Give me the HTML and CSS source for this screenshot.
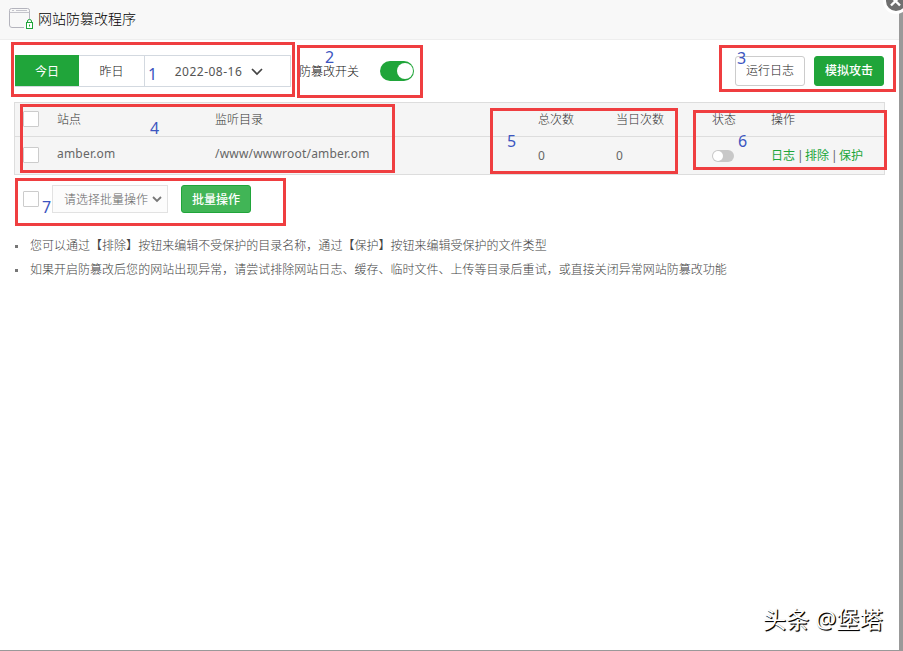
FILE: index.html
```html
<!DOCTYPE html>
<html lang="zh-CN">
<head>
  <meta charset="UTF-8">
  <title>网站防篡改程序</title>
  <link rel="stylesheet" href="styles.css">
</head>
<body>
<div class="dialog">
  <div class="dialog-title">
    <svg class="title-icon" width="26" height="22" viewBox="0 0 26 22" fill="none">
      <path d="M15 19.500H3Q.5 19.500 .5 17V2.500Q.5 .5 2.500 .5H18.500Q20.500 .5 20.500 2.500V11" stroke="#b4b4bd"/>
      <path d="M.5 4.500H20.500M3 2.500H5M7 2.500H18" stroke="#c4c4cb"/>
      <rect x="17.500" y="14.500" width="6" height="6" fill="#fff" stroke="#20a53a"/>
      <path d="M18.500 14V13Q18.500 11.500 20.500 11.500Q22.500 11.500 22.500 13V14M20.500 16.500V18.500" stroke="#20a53a"/>
    </svg>
    <span>网站防篡改程序</span>
  </div>

  <div class="toolbar">
    <div class="date-tabs">
      <span class="tab active">今日</span>
      <span class="tab">昨日</span>
      <span class="tab date">2022-08-16
        <svg width="12" height="8" viewBox="0 0 12 8" fill="none"><path d="M1 1L6 6L11 1" stroke="#444" stroke-width="1.700"/></svg>
      </span>
    </div>
    <span class="switch-label">防篡改开关</span>
    <span class="switch on"></span>
    <div class="toolbar-right">
      <button class="btn btn-default">运行日志</button>
      <button class="btn btn-success">模拟攻击</button>
    </div>
  </div>

  <div class="table">
    <div class="row head">
      <span class="check"></span>
      <span>站点</span>
      <span>监听目录</span>
      <span>总次数</span>
      <span>当日次数</span>
      <span>状态</span>
      <span>操作</span>
    </div>
    <div class="row">
      <span class="check"></span>
      <span class="latin">amber.om</span>
      <span class="latin">/www/wwwroot/amber.om</span>
      <span class="num">0</span>
      <span class="num">0</span>
      <span class="switch small"></span>
      <span class="links"><a>日志</a><i>|</i><a>排除</a><i>|</i><a>保护</a></span>
    </div>
  </div>

  <div class="batch">
    <span class="check"></span>
    <div class="select">
      <span>请选择批量操作</span>
      <svg width="10" height="7" viewBox="0 0 10 7" fill="none"><path d="M1 1L5 5L9 1" stroke="#777" stroke-width="1.800"/></svg>
    </div>
    <button class="btn btn-batch">批量操作</button>
  </div>

  <ul class="tips">
    <li>您可以通过【排除】按钮来编辑不受保护的目录名称，通过【保护】按钮来编辑受保护的文件类型</li>
    <li>如果开启防篡改后您的网站出现异常，请尝试排除网站日志、缓存、临时文件、上传等目录后重试，或直接关闭异常网站防篡改功能</li>
  </ul>
</div>

<svg class="close" width="26" height="26" viewBox="0 0 26 26" fill="none">
  <circle cx="13" cy="13" r="11.500" fill="#6f6f6f" stroke="#fff" stroke-width="3"/>
  <path d="M8 17.500L17 8.500M8 8.500L17 17.500" stroke="#fff" stroke-width="2.400"/>
</svg>

<!-- 标注 -->
<div class="mark m1"></div>
<div class="mark m2"></div>
<div class="mark m3"></div>
<div class="mark m4"></div>
<div class="mark m5"></div>
<div class="mark m6"></div>
<div class="mark m7"></div>
<span class="no n1">1</span>
<span class="no n2">2</span>
<span class="no n3">3</span>
<span class="no n4">4</span>
<span class="no n5">5</span>
<span class="no n6">6</span>
<span class="no n7">7</span>
<div class="watermark">头条 @堡塔</div>
</body>
</html>
```

FILE: styles.css
```css
* {
  box-sizing: border-box;
}

body {
  margin: 0;
  height: 651px;
  position: relative;
  overflow: hidden;
  background: #999;
  font: 300 12px/18px "Noto Sans", "Noto Sans CJK SC", sans-serif;
  color: #333;
}

.dialog {
  width: 899px;
  height: 650px;
  background: #fff;
}

.dialog-title {
  height: 40px;
  padding: 0 0 2px 9px;
  display: flex;
  align-items: center;
  gap: 3px;
  background: #f8f8f8;
  border-bottom: 1px solid #eee;
  font-size: 14px;
  color: #000;
}

.toolbar {
  display: flex;
  align-items: center;
  padding: 15px 15px 0;
  height: 47px;
}

.date-tabs {
  display: flex;
  width: 276px;
  height: 32px;
  border: 1px solid #d3d9e0;
  border-left: 0;
  color: #111;
}

.tab {
  width: 66px;
  padding-top: 1px;
  display: flex;
  align-items: center;
  justify-content: center;
  border-right: 1px solid #d3d9e0;
}

.tab.active {
  width: 64px;
  height: 31px;
  margin-top: -1px;
  padding-top: 2px;
  background: #20a53a;
  border: 0;
  color: #fff;
  font-weight: 400;
}

.tab.date {
  flex: 1;
  gap: 9px;
  padding-left: 3px;
  border: 0;
  letter-spacing: 0.5px;
  font-weight: 400;
  color: #555;
}

.switch-label {
  margin-left: 8px;
  margin-right: 21px;
  padding-top: 2px;
  line-height: 14px;
  color: #111;
}

.switch {
  width: 34px;
  height: 20px;
  padding: 1px;
  border-radius: 10px;
  display: flex;
}

.switch::after {
  content: "";
  width: 16px;
  height: 16px;
  border-radius: 50%;
  background: #fff;
}

.switch.on {
  padding: 2px 1px;
  justify-content: flex-end;
  background: #20a53a;
}

.switch.small {
  width: 22px;
  height: 12px;
  background: #c8c8c8;
}

.switch.small::after {
  width: 10px;
  height: 10px;
}

.toolbar-right {
  margin-left: auto;
  display: flex;
  gap: 9px;
}

.btn {
  width: 70px;
  height: 30px;
  padding: 0;
  border: 1px solid #ccc;
  border-radius: 3px;
  font: inherit;
}

.btn-default {
  background: #fff;
  color: #222;
}

.btn-success {
  background: #20a53a;
  border-color: #20a53a;
  color: #fff;
  font-weight: 500;
}

.table {
  width: 871px;
  height: 73px;
  margin: 15px 0 0 14px;
  border: 1px solid #ddd;
  background: #f5f5f5;
}

.row {
  display: grid;
  grid-template-columns: 34px 158px 323px 78px 96px 59px 1fr;
  align-items: center;
  height: 37px;
  padding-left: 8px;
}

.row.head {
  height: 34px;
  border-bottom: 1px solid #ddd;
}

.check {
  width: 16px;
  height: 16px;
  background: #fff;
  border: 1px solid #ccc;
  border-radius: 1px;
}

.row .check {
  margin-bottom: 1px;
}

.num {
  font-weight: 400;
  color: #666;
}

.latin {
  padding-bottom: 3px;
  letter-spacing: 0.2px;
  font-weight: 400;
  color: #666;
}

.links {
  display: flex;
  gap: 2px;
  font-weight: 400;
  color: #20a53a;
}

.links i {
  width: 6px;
  text-align: center;
  font-style: normal;
  color: #666;
}

.batch {
  display: flex;
  align-items: center;
  height: 28px;
  margin-top: 10px;
  padding-left: 23px;
}

.select {
  display: flex;
  align-items: center;
  gap: 4px;
  width: 116px;
  height: 28px;
  margin: 0 13px;
  padding: 1px 0 0 11px;
  border: 1px solid #e2e2e2;
  background: #fcfcfc;
  color: #666;
}

.btn-batch {
  height: 28px;
  padding-top: 1px;
  background: #41b556;
  border-color: #20a53a;
  color: #fff;
  font-weight: 500;
}

.tips {
  margin: 21px 0 0;
  padding: 0 0 0 15px;
  list-style: none;
  line-height: 24px;
  color: #444;
}

.tips li {
  display: flex;
  align-items: center;
  gap: 12px;
  white-space: nowrap;
  letter-spacing: 0.015px;
}

.tips li::before {
  content: "";
  width: 3px;
  height: 3px;
  background: #777;
}

.close {
  position: absolute;
  left: 883px;
  top: -12px;
}

.mark {
  position: absolute;
  border: 3px solid #ef3e40;
}

.m1 { left: 11px; top: 42px; width: 284px; height: 55px; }
.m2 { left: 297px; top: 45px; width: 126px; height: 53px; }
.m3 { left: 719px; top: 45px; width: 177px; height: 47px; }
.m4 { left: 20px; top: 104px; width: 375px; height: 69px; }
.m5 { left: 490px; top: 108px; width: 188px; height: 66px; }
.m6 { left: 693px; top: 110px; width: 194px; height: 60px; }
.m7 { left: 15px; top: 178px; width: 271px; height: 48px; }

.no {
  position: absolute;
  font-size: 16px;
  line-height: 14px;
  font-weight: 400;
  color: #3c55c0;
}

.n1 { left: 148px; top: 67px; }
.n2 { left: 325px; top: 50px; }
.n3 { left: 737px; top: 51px; }
.n4 { left: 150px; top: 121px; }
.n5 { left: 507px; top: 134px; }
.n6 { left: 738px; top: 134px; }
.n7 { left: 42px; top: 200px; }

.watermark {
  position: absolute;
  left: 763px;
  top: 604px;
  font-size: 23px;
  line-height: 30px;
  letter-spacing: 0.2px;
  font-weight: 400;
  color: #fff;
  text-shadow: 1px 1px 1px #000, 1px 1px 0 #222;
}
```
